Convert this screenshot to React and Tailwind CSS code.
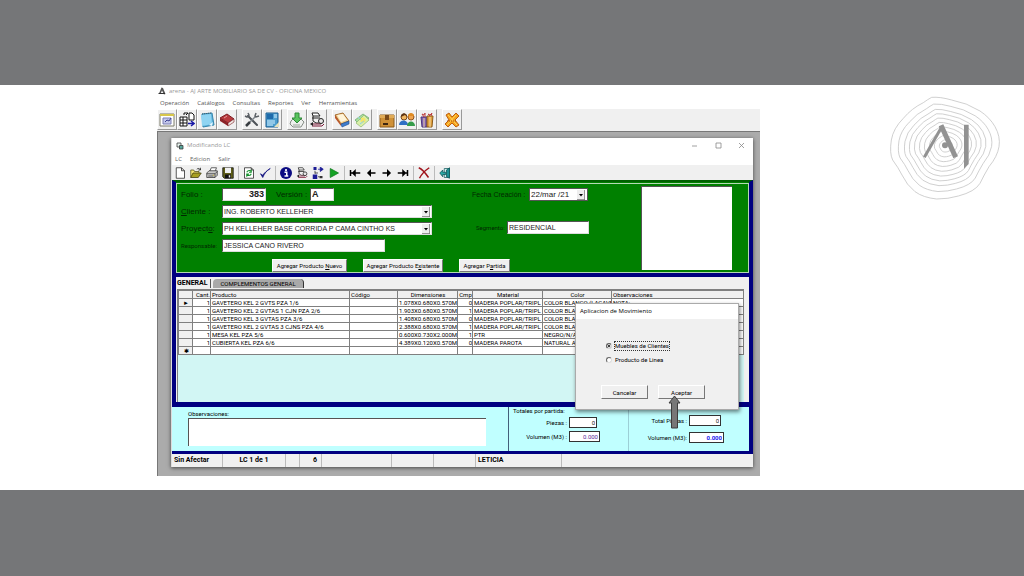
import { useState } from "react";

const menus = ["Operación", "Catálogos", "Consultas", "Reportes", "Ver", "Herramientas"];

const mainTools = [
  ["form", "export", "notes", "book"],
  ["tools", "report"],
  ["download", "process"],
  ["catalog", "money"],
  ["box", "users", "gifts"],
  ["exit"],
];

const editTools = [
  ["new", "open", "print", "save"],
  ["refresh", "check"],
  ["info", "process", "tree", "play"],
  ["first", "prev", "next", "last"],
  ["delete"],
  ["door"],
];

const columns = [
  { label: "", width: "w-[14px]" },
  { label: "Cant.", width: "w-[18px]", align: "text-right" },
  { label: "Producto", width: "w-[139px]", align: "text-left" },
  { label: "Código", width: "w-[48px]", align: "text-left" },
  { label: "Dimensiones", width: "w-[60px]", align: "text-center" },
  { label: "Cmp", width: "w-[15px]", align: "text-center" },
  { label: "Material", width: "w-[70px]", align: "text-center" },
  { label: "Color", width: "w-[69px]", align: "text-center" },
  { label: "Observaciones", width: "", align: "text-left" },
];

const rows = [
  ["GAVETERO KEL 2 GVTS PZA 1/6", "1.078X0.680X0.570M", "0", "MADERA POPLAR/TRIPL", "COLOR BLANCO (LACAVE", "NOTA:"],
  ["GAVETERO KEL 2 GVTAS 1 CJN PZA 2/6", "1.903X0.680X0.570M", "1", "MADERA POPLAR/TRIPL", "COLOR BLAN", ""],
  ["GAVETERO KEL 3 GVTAS PZA 3/6", "1.408X0.680X0.570M", "0", "MADERA POPLAR/TRIPL", "COLOR BLAN", ""],
  ["GAVETERO KEL 2 GVTAS 3 CJNS PZA 4/6", "2.388X0.680X0.570M", "1", "MADERA POPLAR/TRIPL", "COLOR BLAN", ""],
  ["MESA KEL PZA 5/6", "0.600X0.730X2.000M", "1", "PTR", "NEGRO/N/A", ""],
  ["CUBIERTA KEL PZA 6/6", "4.389X0.120X0.570M", "0", "MADERA PAROTA", "NATURAL AY", ""],
];

const icons = {
  form: (
    <>
      <path d="M1 2h14v12H1z" fill="#fff" stroke="#7d7d6a" />
      <path d="M1 2h14v2H1z" fill="#d7c64a" />
      <path d="M4 6h8v6H4z" fill="#c3c7ea" stroke="#7b7fb5" />
      <path d="M6 10l2-2 2 1 2-3" stroke="#3a3f90" fill="none" />
    </>
  ),
  export: (
    <>
      <path d="M1 5h7v9H1zM1 8h7M1 11h7M4 5v9" fill="#fff" stroke="#111" />
      <path d="M10 1h3l2 2v5h-5z" fill="#fff" stroke="#111" />
      <path d="M5 3V1h4M7 3l2-2" stroke="#111" fill="none" />
      <path d="M9 11.500h5M12 9l3 2.500-3 2.500" stroke="#1a1aa8" fill="none" strokeWidth="1.500" />
    </>
  ),
  notes: (
    <>
      <path d="M3 2l10-1 2 12-11 2z" fill="#5bb3dc" stroke="#3684ab" />
      <path d="M2 3l10-1 1 10-10 2z" fill="#8fd4f2" />
      <path d="M3 2l9-1" stroke="#44606d" strokeDasharray="1 1" />
      <path d="M10 13l4-3-1 4z" fill="#e8f7ff" />
    </>
  ),
  book: (
    <>
      <path d="M1 6l7-4 7 5-6 4z" fill="#b83a3e" stroke="#7c1d22" />
      <path d="M1 6v3l8 5v-3z" fill="#8c2227" />
      <path d="M9 11l6-4v3l-6 4z" fill="#f0e8e4" stroke="#7c1d22" strokeWidth=".6" />
      <path d="M5 6l3-2" stroke="#e79b9b" />
    </>
  ),
  tools: (
    <>
      <path d="M4 4l9 9" stroke="#4e5358" strokeWidth="2" strokeLinecap="round" />
      <path d="M12 4L6 10" stroke="#7b8288" strokeWidth="1.500" />
      <path d="M1 4l2 1 2-2-1-2" fill="none" stroke="#5c6166" strokeWidth="1.500" />
      <path d="M12 1l-1 3 1 1 3-1" fill="none" stroke="#5c6166" strokeWidth="1.500" />
      <path d="M2 14l4-4" stroke="#373c40" strokeWidth="2.500" />
    </>
  ),
  report: (
    <>
      <path d="M2 1h12v14H2z" fill="#4d9fd0" stroke="#1f5e91" />
      <path d="M3 2h6v5H3z" fill="#1f6bab" />
      <path d="M3 9h8M3 11h8M3 13h6M10 3h3M10 5h3" stroke="#d7f0ff" />
      <path d="M10 15l5-5v5z" fill="#e7e1bd" />
    </>
  ),
  download: (
    <>
      <path d="M2 9l2-2h8l3 3-3 5H4l-3-3z" fill="#eef0ee" stroke="#858d86" />
      <path d="M6 1h4v5h3L8 11 3 6h3z" fill="#58c45e" stroke="#2f8a39" />
      <path d="M4 13h7" stroke="#9ba39b" />
    </>
  ),
  process: (
    <>
      <path d="M3 1h6l2 3H4z" fill="#fff" stroke="#222" />
      <path d="M3 6h8M4 4v5l3 2h5" fill="none" stroke="#222" />
      <path d="M3 12h9l2-3M3 14h10l2-2" fill="none" stroke="#7d1836" />
      <circle cx="12" cy="9" r="2.500" fill="#e8e8e8" stroke="#222" />
      <path d="M1 12l3-2v4z" fill="#222" />
    </>
  ),
  catalog: (
    <>
      <path d="M1 3l8-2 6 8-8 3z" fill="#f2cf8c" stroke="#a46a2c" />
      <path d="M3 3l6-1 4 6-6 2z" fill="#fff4da" />
      <path d="M1 3l6 9v2L1 6z" fill="#bb5528" />
      <path d="M7 12l8-3v3l-7 3z" fill="#3e7dcd" stroke="#1e4c91" strokeWidth=".6" />
    </>
  ),
  money: (
    <>
      <path d="M1 8l8-6 6 4-8 8z" fill="#a9e0a0" stroke="#69a266" strokeWidth=".7" />
      <path d="M2 11l8-8 5 5-8 7z" fill="#d9efa9" stroke="#8fb86a" strokeWidth=".7" />
      <circle cx="9" cy="8" r="2.500" fill="#f4e56a" />
      <path d="M4 5l3 3M6 12l4-3" stroke="#8fcfe0" />
    </>
  ),
  box: (
    <>
      <path d="M1 3h14v12H1z" fill="#cf9138" stroke="#8b5a1b" />
      <path d="M1 3h14v3H1z" fill="#e0ab56" />
      <path d="M6 3h4v5H6z" fill="#7a4a18" />
      <path d="M4 11h5v2H4z" fill="#3d2610" />
    </>
  ),
  users: (
    <>
      <circle cx="5" cy="5" r="3" fill="#f0b660" stroke="#79471b" />
      <path d="M2 5c0-5 6-5 6 0L6 3z" fill="#5c3415" />
      <path d="M0 13c0-6 9-6 9 0z" fill="#2f6fc4" />
      <circle cx="12" cy="5" r="3" fill="#efa34c" stroke="#8d511b" />
      <path d="M9 4c0-4 6-4 6 0z" fill="#e08b21" />
      <path d="M8 14c0-6 8-6 8 0z" fill="#359c4a" />
    </>
  ),
  gifts: (
    <>
      <path d="M2 5h6v10H3z" fill="#7e5eb0" stroke="#4b367a" />
      <path d="M8 4h6l-1 11H8z" fill="#e0a13e" stroke="#8c5c1c" />
      <path d="M5 5L3 2l2 1 1-2v4M11 4L9 2l2 1 2-2-1 3" fill="none" stroke="#bd4040" />
      <path d="M5 6v9M11 5v10" stroke="#f2dba9" />
    </>
  ),
  exit: (
    <>
      <path d="M2 3l3-2 3 4 4-4 3 3-4 4 4 5-3 2-4-4-4 4-3-3 4-4z" fill="#f4a21c" stroke="#bf5f10" />
      <path d="M4 3l9 10M12 3L3 13" stroke="#ffd65c" />
      <path d="M3 9h10" stroke="#a64b10" strokeDasharray="1 1" />
    </>
  ),
  new: <path d="M3 1h7l4 4v10H3zM10 1v4h4" fill="#fff" stroke="#222" />,
  open: (
    <>
      <path d="M1 14V4h4l1 2h6v3" fill="#f5e774" stroke="#4f4c15" />
      <path d="M1 14l3-6h11l-4 6z" fill="#a8a022" stroke="#3d3a0e" />
      <path d="M9 3c2-2 4-1 5 1M14 1v3h-3" fill="none" stroke="#222" />
    </>
  ),
  print: (
    <>
      <path d="M5 6l2-5h7l-2 5z" fill="#fff" stroke="#333" />
      <path d="M1 8l3-3h11v6l-3 3H1z" fill="#c9c9c9" stroke="#333" />
      <path d="M1 9h11l3-3M3 12h7M12 9v5" stroke="#333" fill="none" />
      <path d="M9 11h2" stroke="#d0b920" />
    </>
  ),
  save: (
    <>
      <path d="M1 1h14v14H3l-2-2z" fill="#5e5e18" stroke="#111" />
      <path d="M4 1h8v7H4z" fill="#f0f0f0" />
      <path d="M4 10h8v5H4z" fill="#111" />
      <path d="M9 11h2v3H9z" fill="#eee" />
    </>
  ),
  refresh: (
    <>
      <path d="M2 1h9l3 3v11H2zM11 1v3h3" fill="#fff" stroke="#222" />
      <path d="M5 7c1-3 5-3 6-1M11 3.500V7H8M11 9c-1 3-5 3-6 1M5 13V9.500h3" fill="none" stroke="#13902a" strokeWidth="1.400" />
    </>
  ),
  check: <path d="M2 9l3 5C7 9 10 5 15 2 10 5 7 8 5 11z" fill="#12127f" stroke="#12127f" />,
  info: (
    <>
      <circle cx="8" cy="8" r="8" fill="#0b0b82" />
      <circle cx="8" cy="4" r="1.500" fill="#fff" />
      <path d="M6 7h3v5M6 12h5" stroke="#fff" strokeWidth="2" fill="none" />
    </>
  ),
  tree: (
    <>
      <path d="M2 0h4v4H2zM1 10h6v6H1z" fill="#1b1b95" />
      <path d="M4 5v4M4 8h4M8 13h2" stroke="#222" />
      <path d="M8 3h6M11 0l4 3-4 3z" stroke="#1b1b95" fill="#1b1b95" />
      <path d="M10 12h4v3h-4z" fill="#333" />
    </>
  ),
  play: <path d="M3 2l11 6-11 6z" fill="#14a324" stroke="#0b7a18" />,
  first: <path d="M2 4v8M3 8h12M8 5L5 8l3 3z" stroke="#000" strokeWidth="2" />,
  prev: <path d="M4 8h10M7 5L4 8l3 3z" stroke="#000" strokeWidth="2" />,
  next: <path d="M2 8h10M9 5l3 3-3 3z" stroke="#000" strokeWidth="2" />,
  last: <path d="M14 4v8M1 8h12M8 5l3 3-3 3z" stroke="#000" strokeWidth="2" />,
  delete: <path d="M1 1c5 2 9 7 13 13M15 1C9 5 5 9 2 15" stroke="#a0141c" strokeWidth="2" fill="none" />,
  door: (
    <>
      <path d="M7 2h7v12H7z" fill="#d3eeee" stroke="#155e60" />
      <path d="M10 4l4-3v14l-4-2z" fill="#1b9294" stroke="#0d5355" />
      <path d="M1 8l4-4v3h4v3H5v3z" fill="#29a9a6" stroke="#0d5355" />
    </>
  ),
};

function Icon({ name, className }) {
  return (
    <svg viewBox="0 0 16 16" className={className} fill="none" aria-hidden="true">
      {icons[name]}
    </svg>
  );
}

function AppMark() {
  return (
    <svg viewBox="0 0 16 16" className="h-2 w-2" aria-hidden="true">
      <path d="M7 1L2 13l3 1 3-7 4 8 3-1L10 2z" fill="#555" />
      <path d="M1 12h13v2H1z" fill="#333" />
    </svg>
  );
}

function FormMark() {
  return (
    <svg viewBox="0 0 16 16" className="h-2 w-2" fill="none" aria-hidden="true">
      <path d="M2 2h8v8H2z" fill="#e8f4ef" stroke="#333" strokeWidth="1.500" />
      <path d="M7 7h7v7H7z" fill="#58a79c" stroke="#333" strokeWidth="1.500" />
    </svg>
  );
}

function DropArrow({ className }) {
  return (
    <svg viewBox="0 0 8 10" className={className} aria-hidden="true">
      <path d="M0 0h8v10H0z" fill="#eee" />
      <path d="M8 0v10H0" fill="none" stroke="#777" strokeWidth="1.500" />
      <path d="M2 4h4L4 6.500z" fill="#000" />
    </svg>
  );
}

function Combo({ id, value }) {
  return (
    <div className="relative w-[210px]">
      <select
        id={id}
        defaultValue={value}
        className="block h-[13px] w-full appearance-none border border-t-[#555] border-l-[#555] border-r-[#ddd] border-b-[#ddd] bg-white pl-px text-[7px] leading-[11px] text-[#222]"
      >
        <option>{value}</option>
      </select>
      <DropArrow className="pointer-events-none absolute top-0.5 right-0.5 h-2.5 w-2" />
    </div>
  );
}

const raised =
  "border border-t-white border-l-white border-r-[#777] border-b-[#777] bg-[#f0f0f0] text-black";

function MainToolbar() {
  return (
    <div className="flex h-[22px] items-start gap-[5px] bg-[#f0f0f0]">
      {mainTools.map((group) => (
        <div key={group[0]} className="flex">
          {group.map((name) => (
            <button
              key={name}
              type="button"
              aria-label={name}
              className="flex h-[21px] w-5 items-center justify-center border border-t-white border-l-white border-r-[#999] border-b-[#999]"
            >
              <Icon name={name} className="h-4 w-4" />
            </button>
          ))}
        </div>
      ))}
    </div>
  );
}

function EditToolbar() {
  return (
    <div className="flex h-[15px] items-center bg-[#f0f0f0]">
      {editTools.map((group, index) => (
        <div
          key={group[0]}
          className={index === 0 ? "flex" : "ml-0.5 flex border-l border-[#bbb] pl-0.5"}
        >
          {group.map((name) => (
            <button
              key={name}
              type="button"
              aria-label={name}
              className="flex h-[14px] w-4 items-center justify-center"
            >
              <Icon name={name} className="h-3 w-3" />
            </button>
          ))}
        </div>
      ))}
    </div>
  );
}

function OrderForm() {
  const input =
    "block h-[13px] border border-t-[#555] border-l-[#555] border-r-[#ddd] border-b-[#ddd] bg-white px-px text-[#222]";

  return (
    <section className="border-x-4 border-t-2 border-b-4 border-[#000080] border-t-[#006000] bg-[#008000]">
      <div className="mt-px flex h-[90px] border border-[#b5d8b5] text-[#002800]">
        <div className="flex w-[264px] flex-col gap-1 pt-1 pl-1">
          <div className="flex items-center">
            <label htmlFor="folio" className="w-[41px] text-[8px] leading-3">Folio :</label>
            <input id="folio" defaultValue="383" className={`${input} w-11 text-right text-[9px] font-bold`} />
            <label htmlFor="version" className="ml-2.5 w-[34px] text-[8px] leading-3">Versión :</label>
            <input id="version" defaultValue="A" className={`${input} w-6 text-[9px] font-bold`} />
          </div>
          <div className="flex items-center">
            <label htmlFor="cliente" className="w-[41px] shrink-0 text-[8px] leading-3"><u>C</u>liente :</label>
            <Combo id="cliente" value="ING. ROBERTO KELLEHER" />
          </div>
          <div className="flex items-center">
            <label htmlFor="proyecto" className="w-[41px] shrink-0 text-[8px] leading-3">Proyect<u>o</u>:</label>
            <Combo id="proyecto" value="PH KELLEHER BASE CORRIDA P CAMA CINTHO KS" />
          </div>
          <div className="flex items-center">
            <label htmlFor="responsable" className="w-[41px] font-[Roboto,sans-serif] text-[6px] leading-3">Responsable:</label>
            <input id="responsable" defaultValue="JESSICA CANO RIVERO" className={`${input} w-[163px] text-[7px]`} />
          </div>
          <div className="mt-[3px] ml-[91px] flex gap-4 font-[Roboto,sans-serif] text-[6px] leading-[11px] whitespace-nowrap">
            <button type="button" className={`${raised} h-[13px] w-[75px] shrink-0`}>Agregar Producto <u>N</u>uevo</button>
            <button type="button" className={`${raised} h-[13px] w-20 shrink-0`}>Agregar Producto E<u>x</u>istente</button>
            <button type="button" className={`${raised} h-[13px] w-[51px] shrink-0`}>Agregar P<u>a</u>rtida</button>
          </div>
        </div>
        <div className="flex w-[200px] flex-col gap-5 pt-1 pl-[31px]">
          <div className="flex items-center">
            <label htmlFor="fecha" className="w-[57px] text-[7px] leading-3">Fecha Creación :</label>
            <div className="flex h-[13px] items-center border border-[#555] bg-white pr-0.5">
              <input id="fecha" defaultValue="22/mar /21" className="w-[47px] pl-px text-[8px] text-[#222]" />
              <button type="button" aria-label="Abrir calendario">
                <DropArrow className="h-2.5 w-2" />
              </button>
            </div>
          </div>
          <div className="flex items-center pl-1">
            <label htmlFor="segmento" className="w-[31px] font-[Roboto,sans-serif] text-[6px] leading-3">Segmento:</label>
            <input id="segmento" defaultValue="RESIDENCIAL" className={`${input} w-[82px] text-[7px]`} />
          </div>
        </div>
        <div className="mt-0.5 h-[84px] w-[91px] border-t border-l border-[#555] bg-white" />
      </div>
    </section>
  );
}

function Items() {
  const cell = "h-2 overflow-hidden border border-[#808080] p-0 pl-px whitespace-nowrap";

  return (
    <section className="h-[130px] border-x-4 border-b-[5px] border-[#000080] bg-[#f0f0f0] pr-[5px] pl-px font-[Roboto,sans-serif]">
      <div role="tablist" className="flex h-3 items-center text-[6px] leading-[9px] text-black">
        <button type="button" role="tab" aria-selected="true" className="w-[34px] border-r border-[#555] text-left text-[7px] font-bold">
          GENERAL
        </button>
        <button type="button" role="tab" aria-selected="false" className="ml-0.5 w-[91px] rounded-t-sm border-r border-[#333] bg-[#a9a9a9]">
          COMPLEMENTOS GENERAL
        </button>
      </div>
      <div className="h-[113px] border-t border-l border-[#808080] bg-[#d2f6f4]">
        <table className="w-full table-fixed border-collapse bg-white text-[6px] leading-[7px] text-black">
          <thead>
            <tr className="bg-[#f0f0f0]">
              {columns.map(({ label, width, align }, index) => (
                <th key={index} className={`${cell} ${width} ${align || ""} font-normal`}>
                  {label}
                </th>
              ))}
            </tr>
          </thead>
          <tbody>
            {rows.map(([product, size, count, material, color, notes], index) => (
              <tr key={product}>
                <td className={`${cell} bg-[#f0f0f0] text-center`}>{index === 0 ? "►" : ""}</td>
                <td className={`${cell} text-right`}>1</td>
                <td className={cell}>{product}</td>
                <td className={cell} />
                <td className={`${cell} text-right`}>{size}</td>
                <td className={`${cell} text-right`}>{count}</td>
                <td className={cell}>{material}</td>
                <td className={cell}>{color}</td>
                <td className={cell}>{notes}</td>
              </tr>
            ))}
            <tr>
              <td className={`${cell} bg-[#f0f0f0] text-center`}>✱</td>
              {columns.slice(1).map(({ label }) => (
                <td key={label} className={cell} />
              ))}
            </tr>
          </tbody>
        </table>
      </div>
    </section>
  );
}

function TotalField({ id, label, value, labelWidth, width, color }) {
  return (
    <div className="flex items-center text-[6px]">
      <label htmlFor={id} className={`${labelWidth} text-right leading-[10px] whitespace-nowrap`}>{label}</label>
      <input
        id={id}
        defaultValue={value}
        className={`ml-0.5 h-[11px] border border-[#333] bg-white px-px text-right ${width} ${color}`}
      />
    </div>
  );
}

function Totals() {
  return (
    <section className="flex h-[47px] border-r-4 border-b-[3px] border-[#000080] bg-[#c0ffff] font-[Roboto,sans-serif] text-black">
      <div className="w-[336px] pt-[3px] pl-4">
        <label htmlFor="observaciones" className="block text-[6px] leading-2">Observaciones:</label>
        <textarea
          id="observaciones"
          className="block h-7 w-[298px] resize-none border-t border-l border-[#555] bg-white text-[6px]"
        />
      </div>
      <div className="w-[120px] border-l border-[#44607a] pl-1">
        <div className="text-[6px] leading-2">Totales por partida:</div>
        <div className="mt-0.5 flex flex-col gap-[3px]">
          <TotalField id="piezas" label="Piezas :" value="0" labelWidth="w-[54px]" width="w-[28px]" color="text-[#222]" />
          <TotalField id="volumen" label="Volumen (M3) :" value="0.000" labelWidth="w-[54px]" width="w-[31px]" color="text-[#5a2a9a]" />
        </div>
      </div>
      <div className="flex flex-1 flex-col gap-1.5 border-l border-[#9ccfd6] pt-2">
        <TotalField id="total-piezas" label="Total Piezas :" value="0" labelWidth="w-[58px]" width="w-8" color="text-[#222]" />
        <TotalField id="total-volumen" label="Volumen (M3):" value="0.000" labelWidth="w-[58px]" width="w-[35px]" color="font-bold text-[#2020ee]" />
      </div>
    </section>
  );
}

function StatusBar() {
  const item = "border-r border-[#bbb]";
  return (
    <footer className="flex h-[13px] items-stretch bg-[#f0f0f0] font-[Roboto,sans-serif] text-[7px] leading-[13px] font-bold text-black">
      <div className={`${item} w-[51px] pl-0.5`}>Sin Afectar</div>
      <div className={`${item} w-[63px] text-center`}>LC 1 de 1</div>
      <div className={`${item} w-[14px]`} />
      <div className={`${item} w-[22px] pr-1 text-right`}>6</div>
      <div className={`${item} w-[70px]`} />
      <div className={`${item} w-[42px]`} />
      <div className={`${item} w-[42px]`} />
      <div className={`${item} w-[86px] pl-0.5`}>LETICIA</div>
    </footer>
  );
}

function MovementDialog() {
  const [kind, setKind] = useState("clientes");
  const radio =
    "h-1.5 w-1.5 appearance-none rounded-full border border-t-[#666] border-l-[#666] border-r-[#ddd] border-b-[#ddd] bg-white checked:bg-black checked:shadow-[inset_0_0_0_1px_white]";

  return (
    <div
      role="dialog"
      aria-label="Aplicacion de Movimiento"
      className="absolute top-[165px] right-[14px] h-[107px] w-[164px] border border-[#aaa] bg-[#f0f0f0] font-[Roboto,sans-serif] text-black shadow-[1px_2px_4px_rgba(0,0,0,0.5)]"
    >
      <h2 className="h-[15px] bg-white pl-1 font-['Open_Sans','Noto_Sans',sans-serif] text-[6px] leading-[15px]">
        Aplicacion de Movimiento
      </h2>
      <div className="mt-[22px] flex flex-col items-start gap-1 pl-[30px] text-[6px] leading-2">
        <label className="flex items-center gap-0.5">
          <input type="radio" name="kind" className={radio} checked={kind === "clientes"} onChange={() => setKind("clientes")} />
          <span className="border border-dotted border-[#333]">Muebles de Clientes</span>
        </label>
        <label className="flex items-center gap-0.5">
          <input type="radio" name="kind" className={radio} checked={kind === "linea"} onChange={() => setKind("linea")} />
          <span className="border border-transparent">Producto de Linea</span>
        </label>
      </div>
      <div className="mt-5 flex gap-2.5 pl-[25px] text-[6px] leading-[11px]">
        <button type="button" className={`${raised} h-[14px] w-[47px]`}>Cancelar</button>
        <button type="button" className={`${raised} h-[14px] w-[47px] border-t-[#777] border-l-[#777]`}>Aceptar</button>
      </div>
      <svg viewBox="0 0 13 34" className="absolute top-[91px] left-[92px] h-[34px] w-[13px]" aria-hidden="true">
        <path d="M6.500 1L12 8H9.500v25h-6V8H1z" fill="#777" stroke="#3d3d3d" />
      </svg>
    </div>
  );
}

function EditWindow() {
  return (
    <div className="relative border-l border-[#ddd] bg-white shadow-[0_1px_4px_rgba(0,0,0,0.6)]">
      <div className="flex h-[15px] items-center gap-[3px] pr-2 pl-1 font-['Open_Sans','Noto_Sans',sans-serif] text-[6px] text-[#999]">
        <FormMark />
        <span className="flex-1">Modificando LC</span>
        <svg viewBox="0 0 54 8" className="h-2 w-[54px]" fill="none" stroke="#888" strokeWidth=".8" aria-hidden="true">
          <path d="M1 4h5M25 1h5v5h-5zM48 1l5 5M53 1l-5 5" />
        </svg>
      </div>
      <nav className="flex h-3 gap-2 pl-[3px] font-['Open_Sans','Noto_Sans',sans-serif] text-[6px] leading-3 text-[#666]">
        <button type="button">LC</button>
        <button type="button">Edicion</button>
        <button type="button">Salir</button>
      </nav>
      <EditToolbar />
      <OrderForm />
      <Items />
      <Totals />
      <StatusBar />
      <MovementDialog />
    </div>
  );
}

const ringScales = [1, 0.86, 0.75, 0.66, 0.57, 0.48, 0.39, 0.3, 0.21, 0.12];

function Logo() {
  return (
    <svg viewBox="0 0 450 375" className="h-[125px] w-[150px]" fill="none" role="img" aria-label="AJ Arte Mobiliario">
      {ringScales.map((scale) => (
        <path
          key={scale}
          d="M185 37Q210 35 245 45Q290 53 330 78Q360 98 375 125Q392 155 387 185Q382 215 357 245Q342 270 330 295Q315 320 265 333Q235 342 200 342Q160 338 135 320Q110 300 96 270Q85 248 68 225Q58 205 64 165Q70 130 100 100Q125 70 160 53Q172 44 185 37Z"
          transform={`translate(${228 * (1 - scale)} ${182 * (1 - scale)}) scale(${scale})`}
          stroke="#c4c4c4"
          strokeWidth=".8"
          vectorEffect="non-scaling-stroke"
        />
      ))}
      <circle cx="225" cy="181" r="9" fill="#929292" />
      <path d="M163 217L215 126" stroke="#929292" strokeWidth="9" />
      <path d="M213 121L257 217" stroke="#929292" strokeWidth="15" />
      <path d="M282 119h14v118l-14 14z" fill="#929292" />
    </svg>
  );
}

export default function App() {
  return (
    <div className="flex min-h-screen flex-col bg-[#757678] font-['Liberation_Sans',Arial,sans-serif]">
      <main className="mt-[85px] flex bg-white pb-[14px] pl-[157px]">
        <div className="min-w-0 flex-1">
          <header className="font-['Open_Sans','Noto_Sans',sans-serif] text-[6px]">
            <div className="flex h-3 items-center gap-[3px] pl-px text-[#999]">
              <AppMark />
              <h1>arena - AJ ARTE MOBILIARIO SA DE CV - OFICINA MEXICO</h1>
            </div>
            <nav className="flex h-3 gap-2 pl-[3px] leading-[11px] text-[#555]">
              {menus.map((menu) => (
                <button key={menu} type="button">{menu}</button>
              ))}
            </nav>
          </header>
          <MainToolbar />
          <div className="border-t border-l border-[#777] bg-[#ababab] pt-1.5 pr-[7px] pb-[9px] pl-[13px]">
            <EditWindow />
          </div>
        </div>
        <aside className="w-[264px] pl-[110px]">
          <Logo />
        </aside>
      </main>
    </div>
  );
}
